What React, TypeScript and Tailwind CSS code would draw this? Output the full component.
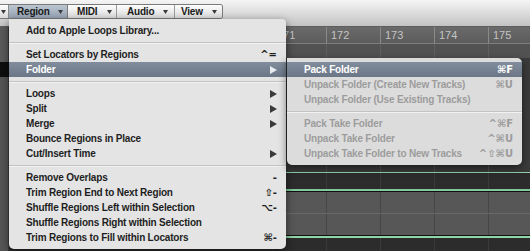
import React from "react";

type Item =
  | { sep: true }
  | { sep?: false; t: string; k?: string; sub?: boolean; hl?: boolean; dis?: boolean };

const mainItems: Item[] = [
  { t: "Add to Apple Loops Library..." },
  { sep: true },
  { t: "Set Locators by Regions", k: "^=" },
  { t: "Folder", sub: true, hl: true },
  { sep: true },
  { t: "Loops", sub: true },
  { t: "Split", sub: true },
  { t: "Merge", sub: true },
  { t: "Bounce Regions in Place" },
  { t: "Cut/Insert Time", sub: true },
  { sep: true },
  { t: "Remove Overlaps", k: "-" },
  { t: "Trim Region End to Next Region", k: "⇧-" },
  { t: "Shuffle Regions Left within Selection", k: "⌥-" },
  { t: "Shuffle Regions Right within Selection" },
  { t: "Trim Regions to Fill within Locators", k: "⌘-" },
];

const subItems: Item[] = [
  { t: "Pack Folder", k: "⌘F", hl: true },
  { t: "Unpack Folder (Create New Tracks)", k: "⌘U", dis: true },
  { t: "Unpack Folder (Use Existing Tracks)", dis: true },
  { sep: true },
  { t: "Pack Take Folder", k: "^⌘F", dis: true },
  { t: "Unpack Take Folder", k: "^⌘U", dis: true },
  { t: "Unpack Take Folder to New Tracks", k: "^⇧⌘U", dis: true },
];

function Down() {
  return (
    <svg width="5" height="4" viewBox="0 0 5 4" className="shrink-0">
      <path d="M0 0H5L2.5 4Z" fill="#3a3a3a" />
    </svg>
  );
}

function Right({ light }: { light?: boolean }) {
  return (
    <svg width="7" height="8" viewBox="0 0 7 8" className="shrink-0">
      <path d="M0 0L7 4L0 8Z" fill={light ? "#e8ecf0" : "#3a3a3a"} />
    </svg>
  );
}

function MenuRows({ items }: { items: Item[] }) {
  return (
    <>
      {items.map((it, i) =>
        it.sep ? (
          <div key={i} className="h-[9px] flex flex-col justify-center">
            <div className="h-px bg-[#c3c3c3]" />
            <div className="h-px bg-[#f2f2f2]" />
          </div>
        ) : (
          <div
            key={i}
            className={
              it.hl
                ? "h-[15px] flex items-center justify-between pl-[17px] pr-[9px] bg-gradient-to-b from-[#818d9c] to-[#6b7787] text-white"
                : it.dis
                ? "h-[15px] flex items-center justify-between pl-[17px] pr-[9px] text-[#9c9c9c]"
                : "h-[15px] flex items-center justify-between pl-[17px] pr-[9px] text-[#1e1e1e]"
            }
          >
            <span className="whitespace-nowrap">{it.t}</span>
            {it.sub ? (
              <Right light={it.hl} />
            ) : it.k ? (
              <span className="whitespace-nowrap font-['DejaVu_Sans',sans-serif] tracking-normal">{it.k}</span>
            ) : null}
          </div>
        )
      )}
    </>
  );
}

const cols = [171, 172, 173, 174, 175];

function Lane({ h, bg, line }: { h: string; bg: string; line: string }) {
  return (
    <div className={`flex shrink-0 ${h} ${bg}`}>
      <div className="w-[263px] shrink-0" />
      {cols.map((c) => (
        <div key={c} className={`w-[54px] shrink-0 border-l ${line}`} />
      ))}
    </div>
  );
}

export default function App() {
  return (
    <div className="relative w-[530px] h-[251px] overflow-hidden bg-[#3a3a3a] font-['Liberation_Sans','DejaVu_Sans',sans-serif] text-[10px] font-bold tracking-[-0.2px]">
      {/* toolbar */}
      <div className="h-[27px] bg-gradient-to-b from-[#f5f5f5] to-[#c3c3c3] border-b border-[#5e5e5e] pt-[4px]">
        <div className="flex h-[15px] w-[223px] border border-l-0 border-[#7b7b7b] rounded-r-[3px] overflow-hidden text-[#1a1a1a]">
          <div className="w-[9px] flex items-center pl-[1px] bg-gradient-to-b from-[#fdfdfd] to-[#dadada] border-r border-[#8a8a8a]">
            <Down />
          </div>
          <div className="w-[59px] flex items-center pl-[8px] bg-gradient-to-b from-[#bcc6d2] to-[#95a2b2] border-r border-[#7b7b7b]">
            <span className="w-[41px]">Region</span>
            <Down />
          </div>
          <div className="w-[49px] flex items-center pl-[9px] bg-gradient-to-b from-[#fdfdfd] to-[#dadada] border-r border-[#9a9a9a]">
            <span className="w-[30px]">MIDI</span>
            <Down />
          </div>
          <div className="w-[58px] flex items-center pl-[10px] bg-gradient-to-b from-[#fdfdfd] to-[#dadada] border-r border-[#9a9a9a]">
            <span className="w-[36px]">Audio</span>
            <Down />
          </div>
          <div className="flex-1 flex items-center pl-[6px] bg-gradient-to-b from-[#fdfdfd] to-[#dadada]">
            <span className="w-[31px]">View</span>
            <Down />
          </div>
        </div>
      </div>

      {/* arrange area */}
      <div className="flex h-[224px]">
        <div className="w-[9px] shrink-0 flex flex-col">
          <div className="h-[35px] bg-[#5a5a5a] border-r border-[#3a3a3a]" />
          <div className="h-[15px] bg-[#0e0e0e]" />
          <div className="flex-1 bg-[#555555] border-r border-[#3c3c3c]" />
        </div>
        <div className="flex-1 flex flex-col overflow-hidden font-normal tracking-normal">
          {/* ruler */}
          <div className="flex shrink-0 h-[17px] bg-gradient-to-b from-[#6a6a6a] to-[#5c5c5c] border-b border-[#7e7e7e] text-[11px] text-[#c4c4c4]">
            <div className="w-[263px] shrink-0" />
            {cols.map((c) => (
              <div key={c} className="w-[54px] shrink-0 border-l border-[#8a8a8a] pl-[4px] flex items-center">
                {c}
              </div>
            ))}
          </div>
          <Lane h="h-[14px]" bg="bg-[#525252]" line="border-[#606060]" />
          <Lane h="h-[114px]" bg="bg-[#3b3b3b]" line="border-[#505050]" />
          <div className="h-px shrink-0 bg-[#8fd5a8]" />
          <Lane h="h-[16px]" bg="bg-[#2c2c2c]" line="border-[#3a3a3a]" />
          <div className="h-[2px] shrink-0 bg-[#7fc99b]" />
          <div className="h-px shrink-0 bg-[#111111]" />
          <Lane h="h-[21px]" bg="bg-[#575757]" line="border-[#464646]" />
          <div className="h-px shrink-0 bg-[#686868]" />
          <Lane h="h-[21px]" bg="bg-[#575757]" line="border-[#464646]" />
          <div className="h-px shrink-0 bg-[#111111]" />
          <div className="h-[2px] shrink-0 bg-[#8fd5a8]" />
          <Lane h="h-[20px]" bg="bg-[#2c2c2c]" line="border-[#3a3a3a]" />
        </div>
      </div>

      {/* Region menu */}
      <div className="absolute left-[9px] top-[19px] w-[277px] pt-[4px] pb-[4px] bg-[#e4e4e4] rounded-b-[5px] rounded-tr-[4px] shadow-[0_3px_9px_rgba(0,0,0,0.55)]">
        <MenuRows items={mainItems} />
      </div>

      {/* Folder submenu */}
      <div className="absolute left-[287px] top-[58px] w-[235px] pt-[4px] pb-[4px] bg-[#dcdcdc] rounded-[5px] rounded-tl-none shadow-[0_3px_9px_rgba(0,0,0,0.55)]">
        <MenuRows items={subItems} />
      </div>
    </div>
  );
}
